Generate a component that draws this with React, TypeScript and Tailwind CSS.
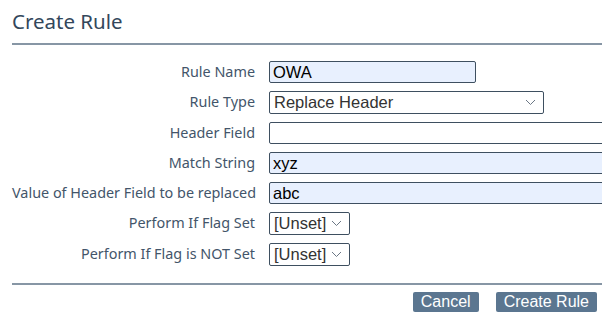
import React from "react";

const labelCls =
  "text-right text-[14.4px] leading-[22px] text-[#43556a] whitespace-nowrap [font-family:'Noto_Sans',sans-serif]";
const inputCls =
  "h-[22px] rounded-[2px] border border-[#3e4f60] px-[3px] text-[16.5px] leading-[20px] text-black outline-none [font-family:'Liberation_Sans',Arial,sans-serif]";

const Chevron = () => (
  <svg
    width="11"
    height="7"
    viewBox="0 0 11 7"
    className="pointer-events-none absolute right-[8px] top-[8px]"
  >
    <path d="M1 1l4.5 4.5L10 1" fill="none" stroke="#6b7785" strokeWidth="1" />
  </svg>
);

const Select = ({ value, width }: { value: string; width: string }) => (
  <div className={`relative h-[23px] ${width}`}>
    <div className="flex h-full w-full items-center rounded-[2px] border border-[#3e4f60] bg-white pl-[4px] text-[16.5px] text-[#333] [font-family:'Liberation_Sans',Arial,sans-serif]">
      {value}
    </div>
    <Chevron />
  </div>
);

const App = () => {
  return (
    <div
      className="h-[319px] w-[602px] overflow-hidden bg-white pl-3"
      style={{ fontFamily: "'Liberation Sans', Arial, sans-serif" }}
    >
      <h1 className="pt-[7px] text-[20.5px] leading-[28px] text-[#33475b] [font-family:'Noto_Sans',sans-serif]">
        Create Rule
      </h1>
      <div className="mt-[8px] h-[2px] w-[600px] bg-[#8796a5]"></div>

      <div className="mt-[16px] grid grid-cols-[243px_auto] gap-x-[14px] gap-y-[8px]">
        <div className={labelCls}>Rule Name</div>
        <input className={`${inputCls} w-[207px] bg-[#e8f0fe]`} defaultValue="OWA" />

        <div className={labelCls}>Rule Type</div>
        <Select value="Replace Header" width="w-[275px]" />

        <div className={labelCls}>Header Field</div>
        <input className={`${inputCls} w-[340px] bg-white`} defaultValue="" />

        <div className={labelCls}>Match String</div>
        <input className={`${inputCls} w-[340px] bg-[#e8f0fe]`} defaultValue="xyz" />

        <div className={labelCls}>Value of Header Field to be replaced</div>
        <input className={`${inputCls} w-[340px] bg-[#e8f0fe]`} defaultValue="abc" />

        <div className={labelCls}>Perform If Flag Set</div>
        <Select value="[Unset]" width="w-[81px]" />

        <div className={labelCls}>Perform If Flag is NOT Set</div>
        <Select value="[Unset]" width="w-[81px]" />
      </div>

      <div className="mt-[17px] h-[2px] w-[600px] bg-[#8796a5]"></div>

      <div className="mt-[7px] flex justify-end gap-[17px] pr-[5px]">
        <button className="h-[20px] rounded-[2px] bg-[#5b7690] px-[8px] text-[16px] leading-[20px] text-white">
          Cancel
        </button>
        <button className="h-[20px] rounded-[2px] bg-[#5b7690] px-[8px] text-[16px] leading-[20px] text-white">
          Create Rule
        </button>
      </div>
    </div>
  );
};

export default App;
